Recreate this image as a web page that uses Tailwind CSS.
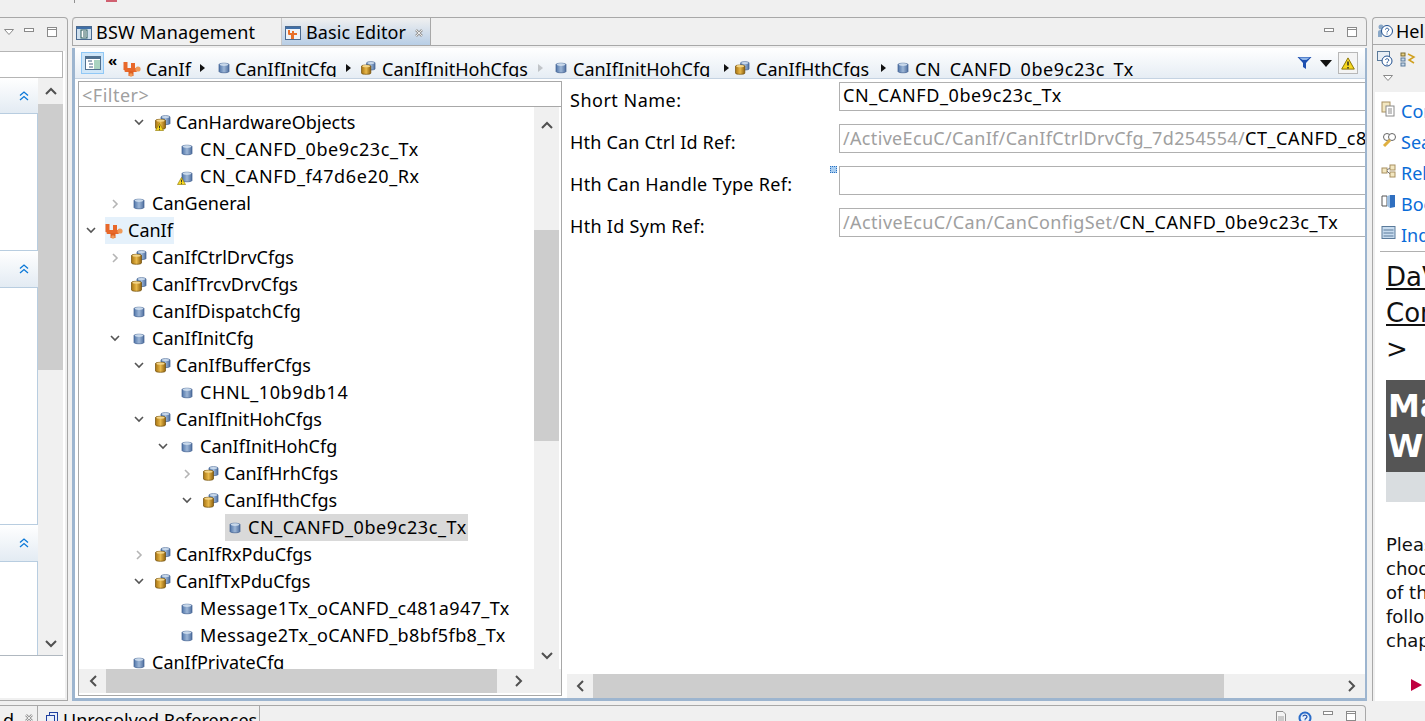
<!DOCTYPE html>
<html lang="en">
<head>
<meta charset="UTF-8">
<title>Basic Editor</title>
<script src="https://cdn.jsdelivr.net/npm/@tailwindcss/browser@4"></script>
</head>
<body class="w-[1425px] h-[721px] overflow-hidden bg-[#f0f0f0] flex flex-col font-['Noto_Sans',sans-serif] text-[18px] text-black">
<svg width="0" height="0" class="absolute">
  <defs>
    <linearGradient id="blue" x1="0" x2="1" y1="0" y2="0"><stop offset="0" stop-color="#4f74a8"/><stop offset=".5" stop-color="#9db6d6"/><stop offset="1" stop-color="#4f6f9f"/></linearGradient>
    <linearGradient id="gold" x1="0" x2="1" y1="0" y2="0"><stop offset="0" stop-color="#a87412"/><stop offset=".5" stop-color="#e8b84a"/><stop offset="1" stop-color="#8f6210"/></linearGradient>
    <symbol id="cyl" viewBox="0 0 12 12"><path d="M1 2.5C1 .8 11 .8 11 2.5V9.5C11 11.2 1 11.2 1 9.5Z" fill="url(#blue)" stroke="#3f5f8f" stroke-width=".7"/><ellipse cx="6" cy="2.6" rx="4.2" ry="1.3" fill="#c8d8ea"/></symbol>
    <symbol id="stack" viewBox="0 0 16 15"><path d="M6 2C6 .4 15 .4 15 2V8.500C15 10 6 10 6 8.500Z" fill="url(#blue)" stroke="#3f5f8f" stroke-width=".7"/><ellipse cx="10.500" cy="2.100" rx="3.800" ry="1.100" fill="#c8d8ea"/><path d="M.5 5.500C.5 3.900 10.500 3.900 10.500 5.500V13C10.500 14.700 .5 14.700 .5 13Z" fill="url(#gold)" stroke="#6f4c08" stroke-width=".7"/><ellipse cx="5.500" cy="5.600" rx="4.200" ry="1.200" fill="#f3d58a"/></symbol>
    <symbol id="warn" viewBox="0 0 10 9"><path d="M5 .5L9.5 8.5H.5Z" fill="#f7d820" stroke="#8a7400" stroke-width=".7"/><path d="M5 3V6M5 7V8" stroke="#222" stroke-width="1"/></symbol>
    <symbol id="plug" viewBox="0 0 18 16"><rect x=".5" y="1" width="4" height="8" fill="#e8682a"/><rect x="8" y="2" width="4" height="6" fill="#e8682a"/><rect x="1.500" y="7" width="12.500" height="4" rx="1" fill="#e8682a"/><rect x="5.500" y="10" width="5" height="5" fill="#e06020"/><circle cx="15" cy="8" r="2.600" fill="#f09a58"/><circle cx="8" cy="14" r="1.800" fill="#f09a58"/></symbol>
    <symbol id="down" viewBox="0 0 10 7"><path d="M1 1L5 5L9 1" fill="none" stroke="#555" stroke-width="1.600"/></symbol>
    <symbol id="right" viewBox="0 0 7 10"><path d="M1 1L5 5L1 9" fill="none" stroke="#b5b5b5" stroke-width="1.600"/></symbol>
    <symbol id="up2" viewBox="0 0 12 12"><path d="M2 5.500L6 2L10 5.500M2 10L6 6.500L10 10" fill="none" stroke="#0b78d8" stroke-width="1.300"/></symbol>
    <symbol id="sbup" viewBox="0 0 12 8"><path d="M1 7L6 2L11 7" fill="none" stroke="#505050" stroke-width="2"/></symbol>
    <symbol id="sbdown" viewBox="0 0 12 8"><path d="M1 1L6 6L11 1" fill="none" stroke="#505050" stroke-width="2"/></symbol>
    <symbol id="sbleft" viewBox="0 0 8 12"><path d="M7 1L2 6L7 11" fill="none" stroke="#505050" stroke-width="2"/></symbol>
    <symbol id="sbright" viewBox="0 0 8 12"><path d="M1 1L6 6L1 11" fill="none" stroke="#505050" stroke-width="2"/></symbol>
    <symbol id="crumb" viewBox="0 0 5 8"><path d="M0 0L5 4L0 8Z" fill="#111"/></symbol>
    <symbol id="min" viewBox="0 0 10 4"><rect x=".5" y=".5" width="9" height="3" fill="#fff" stroke="#8a8a8a"/></symbol>
    <symbol id="max" viewBox="0 0 10 10"><rect x=".5" y=".5" width="9" height="9" fill="#fff" stroke="#8a8a8a"/><path d="M.5 2.500H9.500" stroke="#8a8a8a"/></symbol>
    <symbol id="menu" viewBox="0 0 10 6"><path d="M.5 .5H9.500L5 5.500Z" fill="#fff" stroke="#8a8a8a"/></symbol>
    <symbol id="close" viewBox="0 0 10 10"><path d="M2 2L8 8M8 2L2 8" stroke="#9a9a9a" stroke-width="2.500"/><path d="M2 2L8 8M8 2L2 8" stroke="#fff" stroke-width=".8"/></symbol>
  </defs>
</svg>

<!-- top strip -->
<div class="h-[17px] shrink-0 flex">
  <div class="ml-[74px] w-px h-[3px] bg-[#909090]"></div>
  <div class="ml-[31px] w-[11px] h-[2px] bg-[#d06070]"></div>
</div>

<!-- workbench -->
<div class="h-[688px] shrink-0 flex">

  <!-- left view -->
  <div class="w-[68px] shrink-0 h-[684px] border-t border-r border-b border-[#a8a8a8] rounded-tr-[4px] flex flex-col">
    <div class="h-[27px] shrink-0 flex items-center">
      <svg class="w-[10px] h-[6px] ml-[4px]"><use href="#menu"/></svg>
      <svg class="w-[10px] h-[4px] ml-[10px] mb-[3px]"><use href="#min"/></svg>
      <svg class="w-[10px] h-[10px] ml-[13px]"><use href="#max"/></svg>
    </div>
    <div class="flex-1 bg-white flex flex-col mr-[2px] mb-[2px]">
      <div class="h-[6px] bg-[#f0f0f0]"></div>
      <div class="h-[27px] shrink-0 w-[63px] border border-l-0 border-[#b5b5b5] bg-white"></div>
      <div class="h-[578px] w-[63px] flex border-b border-[#b0b8c0]">
        <div class="w-[38px] flex flex-col">
          <div class="h-[36px] shrink-0 bg-gradient-to-b from-white to-[#e3ebf3] border-b border-[#b8cde0] flex items-center justify-end pr-[8px]"><svg class="w-[12px] h-[12px]"><use href="#up2"/></svg></div>
          <div class="h-[137px] shrink-0 border-r border-[#b8cde0] border-b"></div>
          <div class="h-[37px] shrink-0 bg-gradient-to-b from-white to-[#e3ebf3] border-b border-[#b8cde0] flex items-center justify-end pr-[8px]"><svg class="w-[12px] h-[12px]"><use href="#up2"/></svg></div>
          <div class="h-[237px] shrink-0 border-r border-[#b8cde0] border-b"></div>
          <div class="h-[37px] shrink-0 bg-gradient-to-b from-white to-[#e3ebf3] border-b border-[#b8cde0] flex items-center justify-end pr-[8px]"><svg class="w-[12px] h-[12px]"><use href="#up2"/></svg></div>
          <div class="flex-1 border-r border-[#b8cde0]"></div>
        </div>
        <div class="w-[25px] bg-[#f0f0f0] flex flex-col items-center">
          <div class="h-[26px] w-full shrink-0 flex items-center justify-center"><svg class="w-[12px] h-[8px]"><use href="#sbup"/></svg></div>
          <div class="h-[266px] w-full shrink-0 bg-[#cdcdcd]"></div>
          <div class="flex-1"></div>
          <div class="h-[26px] w-full shrink-0 flex items-center justify-center pt-[4px]"><svg class="w-[12px] h-[8px]"><use href="#sbdown"/></svg></div>
        </div>
      </div>
    </div>
  </div>

  <!-- editor view -->
  <div class="ml-[4px] w-[1295px] shrink-0 h-[684px] flex flex-col border-t border-[#a8a8a8] rounded-t-[4px]">
    <div class="h-[28px] shrink-0 flex border-b border-[#a8a8a8] border-l border-r rounded-t-[4px]">
      <div class="w-[209px] flex items-center pl-[3px] pt-[2px] border-r border-[#c8c8c8] tracking-[.2px]">
        <svg class="w-[16px] h-[16px] mr-[4px] shrink-0" viewBox="0 0 16 16"><rect x=".5" y="1.500" width="15" height="13" fill="#cfe0ee" stroke="#4a6a90"/><rect x="1" y="2" width="14" height="2" fill="#3f6fa8"/><rect x="5" y="5" width="6" height="8" fill="#fff" stroke="#2a5a5a"/><path d="M7 7H10M7 9H10M7 11H10" stroke="#2a5a5a"/></svg>
        <span>BSW Management</span>
      </div>
      <div class="w-[149px] flex items-center pl-[3px] pt-[2px] bg-gradient-to-b from-[#f0f0f0] to-[#b8cee6] border-r border-[#a8a8a8] tracking-[.1px]">
        <svg class="w-[16px] h-[16px] mr-[5px] shrink-0" viewBox="0 0 16 16"><rect x=".5" y="1.500" width="15" height="13" fill="#eef3f8" stroke="#4a6a90"/><rect x="1" y="2" width="14" height="2" fill="#3f6fa8"/><path d="M3 5H5V8H7V6H9V8H12V10H9V14H6V10H4C3 10 3 9 3 8Z" fill="#e8702a"/></svg>
        <span>Basic Editor</span>
        <svg class="w-[10px] h-[10px] ml-[8px] shrink-0"><use href="#close"/></svg>
      </div>
      <div class="flex-1 flex items-center justify-end">
        <svg class="w-[10px] h-[4px] mr-[13px] mb-[3px]"><use href="#min"/></svg>
        <svg class="w-[10px] h-[10px] mr-[9px]"><use href="#max"/></svg>
      </div>
    </div>

    <div class="flex-1 border-l-[3px] border-r-[2px] border-b-[3px] border-[#9db5cf] mt-[2px] bg-white flex flex-col min-h-0">
      <!-- breadcrumb -->
      <div class="h-[31px] shrink-0 bg-gradient-to-b from-white to-[#e6edf4] border-b border-[#c5d3e2] flex items-center overflow-hidden relative">
        <div class="ml-[6px] w-[23px] h-[22px] bg-[#cfe6f8] border border-[#90c8f6] flex items-center justify-center">
          <svg class="w-[16px] h-[14px]" viewBox="0 0 16 14"><rect x=".5" y=".5" width="15" height="13" fill="#fff" stroke="#50708f"/><rect x="1" y="1" width="14" height="2" fill="#50708f"/><rect x="9" y="4" width="6" height="9" fill="#a9d3c0"/><path d="M3 5H7M4 8H8M4 11H8" stroke="#406080"/></svg>
        </div>
        <span class="ml-[4px] mb-[6px] text-[15px] leading-none font-bold">«</span>
        <div class="absolute top-[6px] left-0 h-[23px] w-[1100px] whitespace-nowrap overflow-hidden">
          <svg class="absolute left-[48px] top-[7px] w-[18px] h-[16px]"><use href="#plug"/></svg>
          <span class="absolute left-[71px] top-[2px]">CanIf</span>
          <svg class="absolute left-[125px] top-[10px] w-[5px] h-[8px]"><use href="#crumb"/></svg>
          <svg class="absolute left-[143px] top-[8px] w-[12px] h-[12px]"><use href="#cyl"/></svg>
          <span class="absolute left-[160px] top-[2px]">CanIfInitCfg</span>
          <svg class="absolute left-[271px] top-[10px] w-[5px] h-[8px]"><use href="#crumb"/></svg>
          <svg class="absolute left-[286px] top-[7px] w-[15px] h-[14px]"><use href="#stack"/></svg>
          <span class="absolute left-[307px] top-[2px]">CanIfInitHohCfgs</span>
          <svg class="absolute left-[463px] top-[10px] w-[5px] h-[8px] opacity-20"><use href="#crumb"/></svg>
          <svg class="absolute left-[480px] top-[8px] w-[12px] h-[12px]"><use href="#cyl"/></svg>
          <span class="absolute left-[498px] top-[2px]">CanIfInitHohCfg</span>
          <svg class="absolute left-[649px] top-[10px] w-[5px] h-[8px]"><use href="#crumb"/></svg>
          <svg class="absolute left-[660px] top-[7px] w-[15px] h-[14px]"><use href="#stack"/></svg>
          <span class="absolute left-[681px] top-[2px]">CanIfHthCfgs</span>
          <svg class="absolute left-[806px] top-[10px] w-[5px] h-[8px]"><use href="#crumb"/></svg>
          <svg class="absolute left-[822px] top-[8px] w-[12px] h-[12px]"><use href="#cyl"/></svg>
          <span class="absolute left-[840px] top-[2px] tracking-[.6px]">CN_CANFD_0be9c23c_Tx</span>
        </div>
        <div class="ml-auto flex items-center mr-[7px]">
          <svg class="w-[15px] h-[14px]" viewBox="0 0 15 14"><path d="M.5 1H14.500L9 7V13L6 11V7Z" fill="#1e50b0"/><path d="M2 1.500H13L9.500 4H5.500Z" fill="#8fb5e8"/></svg>
          <svg class="ml-[8px] w-[12px] h-[7px]" viewBox="0 0 12 7"><path d="M0 0H12L6 7Z" fill="#111"/></svg>
          <div class="ml-[6px] w-[20px] h-[22px] bg-[#f4f4f4] border border-[#b8b8b8] flex items-center justify-center">
            <svg class="w-[14px] h-[13px]"><use href="#warn"/></svg>
          </div>
        </div>
      </div>

      <div class="flex-1 flex min-h-0 pt-[2px]">
        <!-- tree panel -->
        <div class="ml-[3px] w-[484px] shrink-0 h-[615px] border border-[#a8a8a8] flex flex-col">
          <div class="h-[25px] shrink-0 border-b border-[#a8a8a8] flex items-center pl-[3px] pt-[2px] text-[#a0a0a0] tracking-[.5px]">&lt;Filter&gt;</div>
          <div class="flex-1 flex min-h-0">
            <div class="w-[455px] shrink-0 overflow-hidden whitespace-nowrap pt-[2px]">
              <div class="flex h-[27px] items-center pl-[48px]"><span class="w-[26px] pr-[2px] flex justify-center"><svg class="w-[10px] h-[7px]"><use href="#down"/></svg></span><span class="relative ml-[2px] mr-[5px] flex"><svg class="w-[16px] h-[15px]"><use href="#stack"/></svg><svg class="absolute left-0 bottom-[-1px] w-[9px] h-[8px]"><use href="#warn"/></svg></span><span>CanHardwareObjects</span></div>
              <div class="flex h-[27px] items-center pl-[72px]"><span class="w-[26px]"></span><svg class="w-[12px] h-[12px] ml-[4px] mr-[7px]"><use href="#cyl"/></svg><span class="tracking-[.6px]">CN_CANFD_0be9c23c_Tx</span></div>
              <div class="flex h-[27px] items-center pl-[72px]"><span class="w-[26px]"></span><span class="relative ml-[4px] mr-[7px] flex"><svg class="w-[12px] h-[12px]"><use href="#cyl"/></svg><svg class="absolute left-[-4px] bottom-[-2px] w-[9px] h-[8px]"><use href="#warn"/></svg></span><span class="tracking-[.6px]">CN_CANFD_f47d6e20_Rx</span></div>
              <div class="flex h-[27px] items-center pl-[24px]"><span class="w-[26px] pr-[2px] flex justify-center"><svg class="w-[7px] h-[10px]"><use href="#right"/></svg></span><svg class="w-[12px] h-[12px] ml-[4px] mr-[7px]"><use href="#cyl"/></svg><span>CanGeneral</span></div>
              <div class="flex h-[27px] items-center"><span class="w-[26px] pr-[2px] flex justify-center"><svg class="w-[10px] h-[7px]"><use href="#down"/></svg></span><span class="flex items-center h-full bg-[#e5f1fb] pr-[1px]"><svg class="w-[18px] h-[16px] mr-[5px]"><use href="#plug"/></svg><span>CanIf</span></span></div>
              <div class="flex h-[27px] items-center pl-[24px]"><span class="w-[26px] pr-[2px] flex justify-center"><svg class="w-[7px] h-[10px]"><use href="#right"/></svg></span><svg class="w-[16px] h-[15px] ml-[2px] mr-[5px]"><use href="#stack"/></svg><span>CanIfCtrlDrvCfgs</span></div>
              <div class="flex h-[27px] items-center pl-[24px]"><span class="w-[26px]"></span><svg class="w-[16px] h-[15px] ml-[2px] mr-[5px]"><use href="#stack"/></svg><span>CanIfTrcvDrvCfgs</span></div>
              <div class="flex h-[27px] items-center pl-[24px]"><span class="w-[26px]"></span><svg class="w-[12px] h-[12px] ml-[4px] mr-[7px]"><use href="#cyl"/></svg><span class="tracking-[.1px]">CanIfDispatchCfg</span></div>
              <div class="flex h-[27px] items-center pl-[24px]"><span class="w-[26px] pr-[2px] flex justify-center"><svg class="w-[10px] h-[7px]"><use href="#down"/></svg></span><svg class="w-[12px] h-[12px] ml-[4px] mr-[7px]"><use href="#cyl"/></svg><span>CanIfInitCfg</span></div>
              <div class="flex h-[27px] items-center pl-[48px]"><span class="w-[26px] pr-[2px] flex justify-center"><svg class="w-[10px] h-[7px]"><use href="#down"/></svg></span><svg class="w-[16px] h-[15px] ml-[2px] mr-[5px]"><use href="#stack"/></svg><span>CanIfBufferCfgs</span></div>
              <div class="flex h-[27px] items-center pl-[72px]"><span class="w-[26px]"></span><svg class="w-[12px] h-[12px] ml-[4px] mr-[7px]"><use href="#cyl"/></svg><span class="tracking-[.6px]">CHNL_10b9db14</span></div>
              <div class="flex h-[27px] items-center pl-[48px]"><span class="w-[26px] pr-[2px] flex justify-center"><svg class="w-[10px] h-[7px]"><use href="#down"/></svg></span><svg class="w-[16px] h-[15px] ml-[2px] mr-[5px]"><use href="#stack"/></svg><span>CanIfInitHohCfgs</span></div>
              <div class="flex h-[27px] items-center pl-[72px]"><span class="w-[26px] pr-[2px] flex justify-center"><svg class="w-[10px] h-[7px]"><use href="#down"/></svg></span><svg class="w-[12px] h-[12px] ml-[4px] mr-[7px]"><use href="#cyl"/></svg><span>CanIfInitHohCfg</span></div>
              <div class="flex h-[27px] items-center pl-[96px]"><span class="w-[26px] pr-[2px] flex justify-center"><svg class="w-[7px] h-[10px]"><use href="#right"/></svg></span><svg class="w-[16px] h-[15px] ml-[2px] mr-[5px]"><use href="#stack"/></svg><span>CanIfHrhCfgs</span></div>
              <div class="flex h-[27px] items-center pl-[96px]"><span class="w-[26px] pr-[2px] flex justify-center"><svg class="w-[10px] h-[7px]"><use href="#down"/></svg></span><svg class="w-[16px] h-[15px] ml-[2px] mr-[5px]"><use href="#stack"/></svg><span>CanIfHthCfgs</span></div>
              <div class="flex h-[27px] items-center pl-[120px]"><span class="w-[26px]"></span><span class="flex items-center h-full bg-[#d9d9d9] pr-[1px]"><svg class="w-[12px] h-[12px] ml-[4px] mr-[7px]"><use href="#cyl"/></svg><span class="tracking-[.6px]">CN_CANFD_0be9c23c_Tx</span></span></div>
              <div class="flex h-[27px] items-center pl-[48px]"><span class="w-[26px] pr-[2px] flex justify-center"><svg class="w-[7px] h-[10px]"><use href="#right"/></svg></span><svg class="w-[16px] h-[15px] ml-[2px] mr-[5px]"><use href="#stack"/></svg><span>CanIfRxPduCfgs</span></div>
              <div class="flex h-[27px] items-center pl-[48px]"><span class="w-[26px] pr-[2px] flex justify-center"><svg class="w-[10px] h-[7px]"><use href="#down"/></svg></span><svg class="w-[16px] h-[15px] ml-[2px] mr-[5px]"><use href="#stack"/></svg><span>CanIfTxPduCfgs</span></div>
              <div class="flex h-[27px] items-center pl-[72px]"><span class="w-[26px]"></span><svg class="w-[12px] h-[12px] ml-[4px] mr-[7px]"><use href="#cyl"/></svg><span class="tracking-[.4px]">Message1Tx_oCANFD_c481a947_Tx</span></div>
              <div class="flex h-[27px] items-center pl-[72px]"><span class="w-[26px]"></span><svg class="w-[12px] h-[12px] ml-[4px] mr-[7px]"><use href="#cyl"/></svg><span class="tracking-[.4px]">Message2Tx_oCANFD_b8bf5fb8_Tx</span></div>
              <div class="flex h-[27px] items-center pl-[24px]"><span class="w-[26px]"></span><svg class="w-[12px] h-[12px] ml-[4px] mr-[7px]"><use href="#cyl"/></svg><span>CanIfPrivateCfg</span></div>
            </div>
            <div class="w-[25px] shrink-0 bg-[#f0f0f0] flex flex-col">
              <div class="h-[123px] shrink-0 flex justify-center pt-[14px]"><svg class="w-[12px] h-[8px]"><use href="#sbup"/></svg></div>
              <div class="h-[211px] shrink-0 bg-[#cdcdcd]"></div>
              <div class="flex-1"></div>
              <div class="h-[26px] shrink-0 flex items-center justify-center"><svg class="w-[12px] h-[8px]"><use href="#sbdown"/></svg></div>
            </div>
          </div>
          <div class="h-[24px] shrink-0 bg-[#f0f0f0] flex mb-[2px]">
            <div class="w-[27px] flex items-center justify-center"><svg class="w-[8px] h-[12px]"><use href="#sbleft"/></svg></div>
            <div class="w-[391px] bg-[#cdcdcd]"></div>
            <div class="w-[44px] flex items-center justify-center"><svg class="w-[8px] h-[12px]"><use href="#sbright"/></svg></div>
          </div>
        </div>

        <!-- form -->
        <div class="flex-1 min-w-0 flex flex-col">
          <div class="flex-1 pl-[8px] overflow-hidden">
            <div class="flex h-[30px] items-center mb-[13px]">
              <span class="w-[269px] shrink-0 pt-[8px] tracking-[.5px]">Short Name:</span>
              <div class="flex-1 h-[29px] border border-r-0 border-[#b0b0b0] flex items-center pl-[3px] pb-[2px] whitespace-nowrap tracking-[.6px]">CN_CANFD_0be9c23c_Tx</div>
            </div>
            <div class="flex h-[29px] items-center mb-[13px]">
              <span class="w-[269px] shrink-0 pt-[8px] tracking-[.2px]">Hth Can Ctrl Id Ref:</span>
              <div class="flex-1 min-w-0 h-[29px] border border-r-0 border-[#b0b0b0] flex items-center pl-[3px] whitespace-nowrap overflow-hidden"><span class="text-[#a0a0a0] tracking-[.33px]">/ActiveEcuC/CanIf/CanIfCtrlDrvCfg_7d254554/</span><span class="tracking-[.6px]">CT_CANFD_c8b7a2f1</span></div>
            </div>
            <div class="flex h-[29px] items-center mb-[13px] relative">
              <span class="w-[269px] shrink-0 pt-[8px] tracking-[.3px]">Hth Can Handle Type Ref:</span>
              <div class="flex-1 h-[29px] border border-r-0 border-[#b0b0b0]"></div>
              <div class="absolute left-[260px] top-0 w-[7px] h-[7px] bg-[#a8cdf0] border border-dotted border-[#2a70c0]"></div>
            </div>
            <div class="flex h-[29px] items-center">
              <span class="w-[269px] shrink-0 pt-[8px] tracking-[.3px]">Hth Id Sym Ref:</span>
              <div class="flex-1 min-w-0 h-[29px] border border-r-0 border-[#b0b0b0] flex items-center pl-[3px] whitespace-nowrap overflow-hidden"><span class="text-[#a0a0a0] tracking-[.38px]">/ActiveEcuC/Can/CanConfigSet/</span><span class="tracking-[.6px]">CN_CANFD_0be9c23c_Tx</span></div>
            </div>
          </div>
          <div class="ml-[5px] h-[24px] shrink-0 bg-[#f0f0f0] flex">
            <div class="w-[26px] flex items-center justify-center"><svg class="w-[8px] h-[12px]"><use href="#sbleft"/></svg></div>
            <div class="w-[631px] bg-[#cdcdcd]"></div>
            <div class="flex-1"></div>
            <div class="w-[26px] flex items-center justify-center"><svg class="w-[8px] h-[12px]"><use href="#sbright"/></svg></div>
          </div>
        </div>
      </div>
    </div>
  </div>

  <!-- help view -->
  <div class="ml-[5px] flex-1 min-w-0 h-[684px] border-t border-l border-[#a8a8a8] rounded-tl-[4px] flex flex-col overflow-hidden whitespace-nowrap">
    <div class="h-[27px] shrink-0 border-b border-[#a8a8a8] flex items-center pl-[4px]">
      <svg class="w-[16px] h-[16px] mr-[3px] shrink-0" viewBox="0 0 16 16"><circle cx="4" cy="4" r="2.500" fill="#8aa8c8"/><path d="M1 14V9C1 7 3 7 5 7V14Z" fill="#8aa8c8"/><circle cx="10" cy="8" r="5.500" fill="#fff" stroke="#1f4f8f"/><path d="M8.500 6.500C8.500 4.800 11.800 4.800 11.800 6.700C11.800 8 10 8 10 9.500M10 10.500V11.500" fill="none" stroke="#1f4f8f" stroke-width="1"/></svg>
      <span>Help</span>
    </div>
    <div class="h-[27px] shrink-0 flex items-center pl-[4px] gap-[7px]">
      <svg class="w-[16px] h-[16px] shrink-0" viewBox="0 0 16 16"><rect x=".5" y=".5" width="12" height="9" fill="#e8eef5" stroke="#5a7a9a"/><circle cx="10" cy="10" r="5" fill="#fff" stroke="#1f4f8f"/><path d="M8.500 9C8.500 7.300 11.800 7.300 11.800 9.200C11.800 10.500 10 10.500 10 12M10 12.800V13.800" fill="none" stroke="#1f4f8f" stroke-width="1"/></svg>
      <svg class="w-[16px] h-[16px] shrink-0" viewBox="0 0 16 16"><rect x="1" y="2" width="4" height="3" fill="#e8d080" stroke="#7a6a30"/><rect x="1" y="7" width="4" height="3" fill="#c8d8ea" stroke="#5a7a9a"/><rect x="1" y="12" width="4" height="3" fill="#c8d8ea" stroke="#5a7a9a"/><path d="M8 3L14 6L9 9L14 12" fill="none" stroke="#d0a020" stroke-width="1.500"/></svg>
    </div>
    <div class="h-[20px] shrink-0 pl-[10px] pt-[3px]"><svg class="block w-[10px] h-[6px]"><use href="#menu"/></svg></div>
    <div class="flex-1 bg-white ml-[2px]">
      <div class="text-[#0a6cd8] pt-[4px]">
        <div class="flex items-center h-[31px] pl-[6px]"><svg class="w-[15px] h-[16px] mr-[5px] mb-[6px] shrink-0" viewBox="0 0 15 16"><rect x="1" y="1" width="8" height="10" fill="#f3e7c0" stroke="#a89060"/><rect x="5" y="5" width="8" height="10" fill="#fff" stroke="#8a8a8a"/><path d="M7 8H11M7 10H11M7 12H11" stroke="#8a8a8a"/></svg><span>Contents</span></div>
        <div class="flex items-center h-[31px] pl-[6px]"><svg class="w-[16px] h-[16px] mr-[4px] mb-[6px] shrink-0" viewBox="0 0 16 16"><circle cx="6" cy="5" r="3.500" fill="#fff" stroke="#666"/><circle cx="11" cy="5" r="3.500" fill="#fff" stroke="#666"/><path d="M9 8L3 14" stroke="#e0b040" stroke-width="3"/></svg><span>Search</span></div>
        <div class="flex items-center h-[31px] pl-[6px]"><svg class="w-[15px] h-[14px] mr-[5px] mb-[6px] shrink-0" viewBox="0 0 15 14"><rect x="1" y="4" width="5" height="5" fill="#f3e7c0" stroke="#a89060"/><rect x="9" y="1" width="5" height="5" fill="#f3e7c0" stroke="#a89060"/><rect x="9" y="8" width="5" height="5" fill="#f3e7c0" stroke="#a89060"/><path d="M6 6L9 4M6 7L9 10" stroke="#777"/></svg><span>Related Topics</span></div>
        <div class="flex items-center h-[31px] pl-[6px]"><svg class="w-[15px] h-[15px] mr-[5px] mb-[6px] shrink-0" viewBox="0 0 15 15"><path d="M1 2H6V12H1Z" fill="#fff" stroke="#555"/><path d="M9 1H14V13L9 14Z" fill="#2f6fc0"/><path d="M6 2L9 1V14L6 12Z" fill="#9fbfe0"/></svg><span>Bookmarks</span></div>
        <div class="flex items-center h-[31px] pl-[6px]"><svg class="w-[15px] h-[14px] mr-[5px] mb-[6px] shrink-0" viewBox="0 0 14 14"><rect x=".5" y=".5" width="13" height="12" fill="#c8dcef" stroke="#5a7a9a"/><path d="M2 4H12M2 7H12M2 10H12" stroke="#5a7a9a"/></svg><span>Index</span></div>
      </div>
      <div class="ml-[5px] h-px bg-[#b0b0b0]"></div>
      <div class="pl-[11px] font-['DejaVu_Sans',sans-serif] text-[#111]">
        <div class="text-[26px] leading-[36px] underline mt-[7px]">DaVinci</div>
        <div class="text-[26px] leading-[36px] underline">Configurator</div>
        <div class="text-[26px] leading-[36px]">&gt;</div>
        <div class="mt-[13px] h-[92px] bg-[#555] text-white font-bold text-[32px] leading-[40px] pt-[6px] pl-[2px]">Manual<br>Window</div>
        <div class="h-[30px] bg-[#d9dde0]"></div>
        <div class="mt-[31px] text-[18px] leading-[24px]">Please<br>choose one<br>of the<br>following<br>chapters</div>
        <div class="mt-[26px] ml-[25px] w-0 h-0 border-y-[6px] border-y-transparent border-l-[11px] border-l-[#c00040]"></div>
      </div>
    </div>
  </div>
</div>

<!-- bottom panel -->
<div class="flex-1 w-[1366px] flex min-h-0 overflow-hidden whitespace-nowrap border-t border-r border-[#a8a8a8] rounded-tr-[4px]">
  <div class="w-[38px] shrink-0 border-r border-[#a8a8a8] flex items-start pl-[3px] pt-[1px]">
    <span>d</span>
    <svg class="w-[10px] h-[10px] ml-[10px] mt-[6px] shrink-0"><use href="#close"/></svg>
  </div>
  <div class="w-[222px] shrink-0 border-r border-[#a8a8a8] flex items-start pl-[5px] pt-[1px]">
    <svg class="w-[16px] h-[16px] mt-[5px] mr-[4px] shrink-0" viewBox="0 0 16 16"><rect x="6.500" y=".5" width="8" height="9" fill="#e8eef8" stroke="#1f3f9f"/><rect x="3.500" y="3.500" width="8" height="9" fill="#e8eef8" stroke="#1f3f9f"/><circle cx="3" cy="13" r="2.500" fill="#a0a0a0"/></svg>
    <span>Unresolved References</span>
  </div>
  <div class="flex-1 flex justify-end items-start pr-[9px] pt-[5px]">
    <svg class="w-[10px] h-[13px] mr-[12px] shrink-0" viewBox="0 0 10 13"><path d="M.5 .5H7L9.500 3V12.500H.5Z" fill="#f4f4f4" stroke="#909090"/><path d="M2 6H8M2 8H8M2 10H8" stroke="#a0a0a0"/></svg>
    <svg class="w-[14px] h-[14px] mr-[11px] shrink-0" viewBox="0 0 14 14"><circle cx="7" cy="7" r="6.500" fill="#2a6cc8"/><circle cx="7" cy="7" r="4.500" fill="#e8f0fa"/><path d="M5 5.500C5 3.500 9 3.500 9 5.800C9 7.200 7 7.200 7 8.800M7 9.800V11" fill="none" stroke="#1f4fa8" stroke-width="1.200"/></svg>
    <svg class="w-[10px] h-[4px] mr-[13px] shrink-0"><use href="#min"/></svg>
    <svg class="w-[10px] h-[10px] shrink-0"><use href="#max"/></svg>
  </div>
</div>
</body>
</html>
